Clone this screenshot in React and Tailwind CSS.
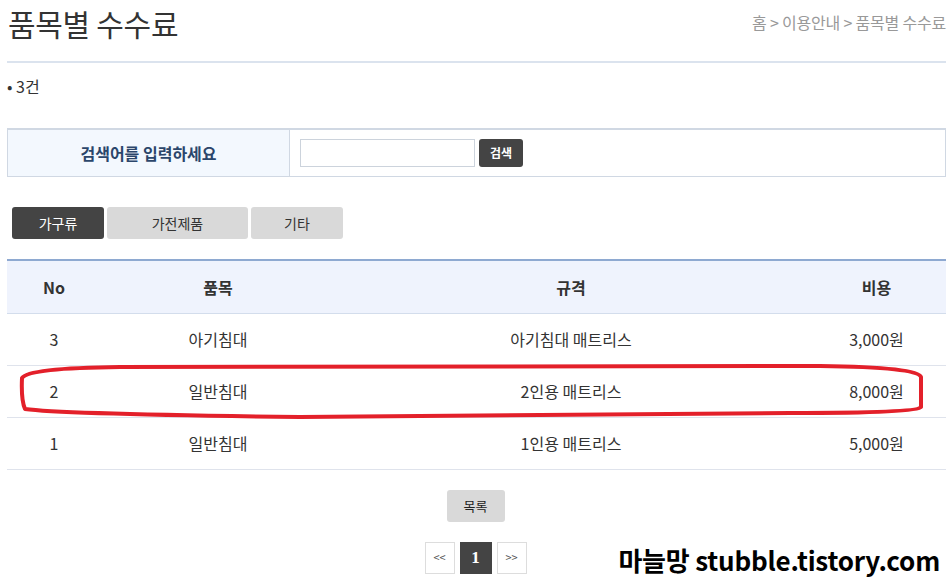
import React from "react";

const rows = [
  { no: 3, item: "아기침대", spec: "아기침대 매트리스", cost: "3,000원" },
  { no: 2, item: "일반침대", spec: "2인용 매트리스", cost: "8,000원" },
  { no: 1, item: "일반침대", spec: "1인용 매트리스", cost: "5,000원" },
];

function App() {
  return (
    <div
      className="relative w-[951px] h-[587px] overflow-hidden bg-white text-[#333]"
      style={{ fontFamily: '"Noto Sans CJK KR", "Noto Sans", sans-serif' }}
    >
      <div className="pl-[7px] pr-[5px]">
        {/* header */}
        <div className="flex items-center justify-between pt-[2px] border-b-2 border-[#dbe3ee] h-[63px] pb-[17px]">
          <h1 className="text-[30px] leading-none pl-[1px] text-[#333] font-normal tracking-[-0.3px]">품목별 수수료</h1>
          <div className="text-[16px] text-[#999] pb-[3px] tracking-[-0.2px]">홈 &gt; 이용안내 &gt; 품목별 수수료</div>
        </div>

        <div className="text-[16px] mt-[12px] leading-[22px]">• 3건</div>

        {/* search */}
        <div className="mt-[31px] flex h-[49px] border border-[#d0d8e3] border-t-2">
          <div className="w-[282px] flex items-center justify-center bg-[#f3f8fe] border-r border-[#d0d8e3] text-[16px] font-bold text-[#2b466b]">
            검색어를 입력하세요
          </div>
          <div className="flex items-center pl-[10px] gap-[4px]">
            <input className="w-[175px] h-[28px] border border-[#ccd3dc] bg-white outline-none" />
            <button className="w-[44px] h-[28px] rounded-[3px] bg-[#444] text-white text-[12px] font-bold">검색</button>
          </div>
        </div>

        {/* tabs */}
        <div className="mt-[30px] flex gap-[3px] pl-[5px]">
          <button className="w-[92px] h-[32px] rounded-[3px] bg-[#444] text-white text-[14px]">가구류</button>
          <button className="w-[141px] h-[32px] rounded-[3px] bg-[#d9d9d9] text-[#333] text-[14px]">가전제품</button>
          <button className="w-[92px] h-[32px] rounded-[3px] bg-[#d9d9d9] text-[#333] text-[14px]">기타</button>
        </div>

        {/* table */}
        <table className="mt-[20px] w-[939px] border-collapse text-[16px]">
          <colgroup>
            <col className="w-[94px]" />
            <col className="w-[234px]" />
            <col className="w-[472px]" />
            <col className="w-[139px]" />
          </colgroup>
          <thead>
            <tr className="bg-[#eff3fd] border-t-2 border-[#8ea9d1] border-b border-b-[#d3ddec] h-[53px]">
              <th className="font-bold text-[#333]">No</th>
              <th className="font-bold text-[#333]">품목</th>
              <th className="font-bold text-[#333]">규격</th>
              <th className="font-bold text-[#333]">비용</th>
            </tr>
          </thead>
          <tbody>
            {rows.map((r) => (
              <tr key={r.no} className="h-[52px] border-b border-[#dfe3ec]">
                <td className="text-center">{r.no}</td>
                <td className="text-center">{r.item}</td>
                <td className="text-center">{r.spec}</td>
                <td className="text-center">{r.cost}</td>
              </tr>
            ))}
          </tbody>
        </table>

        {/* list button */}
        <div className="mt-[20px] flex justify-center pr-[2px]">
          <button className="w-[58px] h-[32px] rounded-[3px] bg-[#d9d9d9] text-[13px] text-[#222]">목록</button>
        </div>

        {/* pagination */}
        <div className="mt-[20px] flex justify-center gap-[5px] pr-[2px]">
          <span className="w-[30px] h-[32px] border border-[#ddd] flex items-center justify-center text-[11px] text-[#555]">&lt;&lt;</span>
          <span
            className="w-[32px] h-[32px] bg-[#444] text-white flex items-center justify-center text-[17px] font-bold"
            style={{ fontFamily: '"Liberation Serif", serif' }}
          >
            1
          </span>
          <span className="w-[30px] h-[32px] border border-[#ddd] flex items-center justify-center text-[11px] text-[#555]">&gt;&gt;</span>
        </div>
      </div>

      {/* red highlight drawn over row 2 */}
      <svg className="absolute left-0 top-0 pointer-events-none" width="951" height="587">
        <path
          d="M 120 367 L 820 366 Q 918 367 921 377 L 921 407 Q 918 413 790 413 L 300 417 Q 60 414 25 409 Q 21 400 22 378 Q 28 368 120 367 Z"
          fill="none"
          stroke="#e3202a"
          strokeWidth="4"
          strokeLinejoin="round"
        />
      </svg>

      {/* watermark */}
      <div
        className="absolute right-[11px] top-[547px] text-[26px] font-bold text-black leading-none tracking-[-0.2px]"
        style={{ fontFamily: '"Noto Sans CJK KR", sans-serif' }}
      >
        마늘망 stubble.tistory.com
      </div>
    </div>
  );
}

export default App;
